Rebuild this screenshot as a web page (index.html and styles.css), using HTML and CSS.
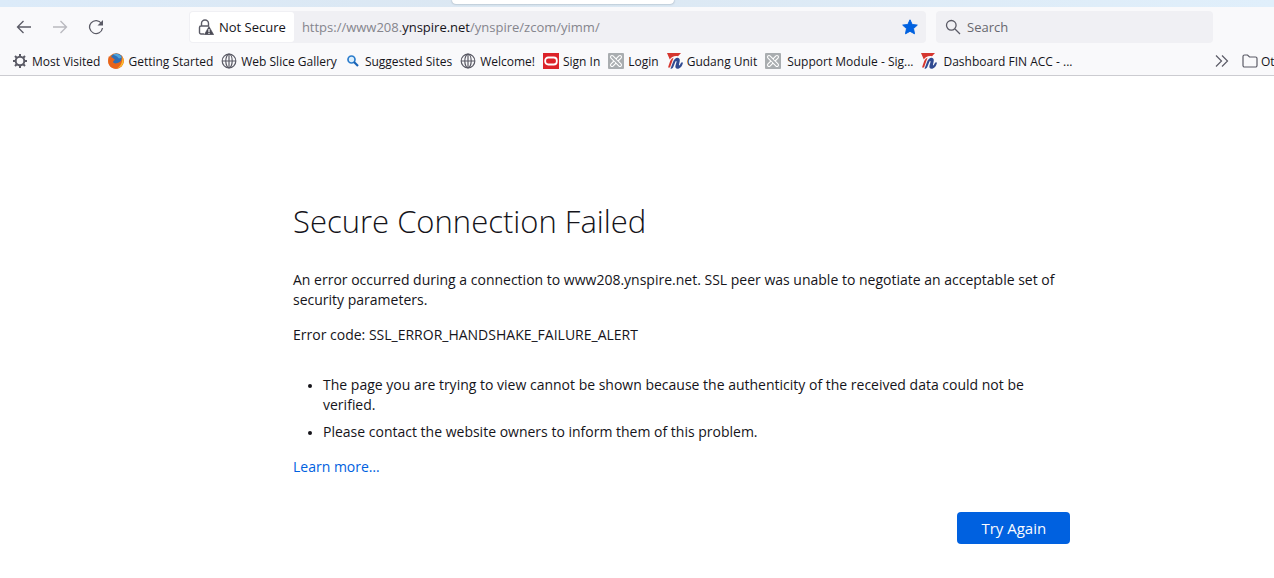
FILE: index.html
```
<!DOCTYPE html>
<html lang="en">
  <head>
    <meta charset="UTF-8" />
    <meta name="viewport" content="width=device-width, initial-scale=1.0" />
    <title>Secure Connection Failed</title>
    <link rel="stylesheet" href="styles.css" />
  </head>
  <body>
    <!-- shared icons -->
    <svg class="sprite" aria-hidden="true">
      <symbol id="globe" viewBox="0 0 16 16">
        <g fill="none" stroke="#5b5b66" stroke-width="1.2">
          <circle cx="8" cy="8" r="6.8" />
          <ellipse cx="8" cy="8" rx="3.2" ry="6.8" />
          <path d="M8 1v14M1 8h14" />
        </g>
      </symbol>
      <symbol id="tools" viewBox="0 0 16 16">
        <rect width="16" height="16" rx="1" fill="#a9adb0" />
        <path d="M4 4l8 8M12 4l-8 8" stroke="#fff" stroke-width="4" stroke-linecap="round" />
        <path d="M4 4l8 8M12 4L9.800 6.200M6.200 9.800L4 12" stroke="#a9adb0" stroke-width="1.800" stroke-linecap="round" />
      </symbol>
      <symbol id="honda" viewBox="0 0 16 16">
        <path d="M0 0h14l-3 3.200C7 2.500 4.500 4 2.800 6.500z" fill="#d5362f" />
        <path d="M3.200 8C4.200 6 5.200 5.200 6.500 4.800L3 14.500H1z" fill="#d5362f" />
        <path d="M3.500 15.800L6 9c1-2.800 3-4.500 4.800-4.200 1.700.3 2.300 1.700 1.900 3.400L12 11.500c-.2 1 .3 1.200.8.4L14.200 9.500H16c-.6 3.800-3 6.300-5.500 6.300-1.800 0-2.500-1.300-2-3.200L9.500 9c.3-1.200-.7-1.400-1.100-.3L6.300 14c-.4 1-1.300 1.800-2.800 1.800z" fill="#304a91" />
      </symbol>
    </svg>

    <header class="browser">
      <div class="tab-strip"><div class="active-tab"></div></div>

      <div class="nav-bar">
        <div class="nav-buttons">
          <button type="button" aria-label="Back">
            <svg viewBox="0 0 16 16"><path d="M15 8H1.500M7.500 2L1.500 8l6 6" /></svg>
          </button>
          <button type="button" aria-label="Forward" disabled>
            <svg viewBox="0 0 16 16"><path d="M1 8h13.500M8.500 2l6 6-6 6" /></svg>
          </button>
          <button type="button" aria-label="Reload">
            <svg viewBox="0 0 16 16">
              <path d="M13.500 4.500A6.500 6.500 0 1 0 14.500 9" />
              <path d="M15 1v5.500H9.500z" fill="#5b5b66" stroke="none" />
            </svg>
          </button>
        </div>

        <div class="url-bar">
          <button type="button" class="identity">
            <svg viewBox="0 0 16 16">
              <path d="M3.500 7V4.500a3.500 3.500 0 0 1 7 0V7M6 15H3A1.500 1.500 0 0 1 1.500 13.500v-5A1.500 1.500 0 0 1 3 7h8" fill="none" stroke="#5b5b66" stroke-width="1.400" />
              <path d="M11 7.500l4.700 8.200H6.300z" fill="#4a4a55" stroke="#4a4a55" stroke-linejoin="round" stroke-width=".6" />
              <path d="M11 10v3M11 13.800v1.100" stroke="#fff" stroke-width="1.200" />
            </svg>
            Not Secure
          </button>
          <a href="#" class="address">https://www208.<span>ynspire.net</span>/ynspire/zcom/yimm/</a>
          <button type="button" class="star" aria-label="Edit this bookmark">
            <svg viewBox="0 0 16 16"><path d="M8 .8l2.200 4.700 5.100.6-3.800 3.500 1 5.200L8 12.300l-4.500 2.500 1-5.200L.7 6.100l5.100-.6z" fill="#0061e0" stroke="#0061e0" stroke-linejoin="round" /></svg>
          </button>
        </div>

        <label class="search-bar">
          <svg viewBox="0 0 16 16"><circle cx="6.300" cy="6.300" r="4.800" /><path d="M10 10l5 5" /></svg>
          <input type="text" placeholder="Search" aria-label="Search" />
        </label>
      </div>

      <nav class="bookmarks">
        <a href="#">
          <svg viewBox="0 0 16 16"><circle cx="8" cy="8" r="4.300" fill="none" stroke="#5b5b66" stroke-width="2" /><path d="M8 1v3M8 12v3M1 8h3M12 8h3M3 3l2.200 2.200M10.800 10.800L13 13M13 3l-2.200 2.200M5.200 10.800L3 13" stroke="#5b5b66" stroke-width="2" /></svg>
          Most Visited
        </a>
        <a href="#">
          <svg viewBox="0 0 16 16">
            <circle cx="8" cy="8" r="7.800" fill="#e8731c" />
            <circle cx="8.500" cy="6.500" r="6" fill="#2f6fb5" />
            <path d="M5 1.500c3-1.500 7-.5 9 3l-3 1-2-2z" fill="#4fa5dd" />
            <path d="M1 3c.5 1 1.500 1.300 3 1.300l2 1.700c1 .3 1 1-.2 1.500L5 9c1 1.800 3 1.500 4.500 1 2-.3 3.500-1.500 4-4l.5-3c1.500 2 2.200 5 1 8-1.500 3.500-5 5-8 4.700C2.500 15 .2 12 .2 8 .2 6 .5 4 1 3z" fill="#e8641b" />
            <path d="M14.500 3.500c1.500 3 1.500 6.500-.5 9-1.500 1.500-3 2.200-4.500 2.500 3-2 5-5 5-11.500z" fill="#fbc02d" />
          </svg>
          Getting Started
        </a>
        <a href="#"><svg><use href="#globe" /></svg>Web Slice Gallery</a>
        <a href="#">
          <svg viewBox="0 0 16 16"><circle cx="6.500" cy="6.500" r="3.500" fill="#dceefb" stroke="#2b7ccc" stroke-width="1.700" /><path d="M9 9l4 4" stroke="#1762b5" stroke-width="2.200" /></svg>
          Suggested Sites
        </a>
        <a href="#"><svg><use href="#globe" /></svg>Welcome!</a>
        <a href="#">
          <svg viewBox="0 0 16 16"><rect width="16" height="16" fill="#dc2229" /><rect x="2.200" y="4.500" width="11.600" height="7" rx="3" fill="none" stroke="#fff" stroke-width="1.800" /></svg>
          Sign In
        </a>
        <a href="#"><svg><use href="#tools" /></svg>Login</a>
        <a href="#"><svg><use href="#honda" /></svg>Gudang Unit</a>
        <a href="#" class="spaced"><svg><use href="#tools" /></svg>Support Module - Sig...</a>
        <a href="#" class="spaced"><svg><use href="#honda" /></svg>Dashboard FIN ACC - ...</a>
        <button type="button" class="overflow" aria-label="More bookmarks">
          <svg viewBox="0 0 16 16"><path d="M2 2.500L7.500 8 2 13.500M8 2.500L13.500 8 8 13.500" fill="none" stroke="#5b5b66" stroke-width="1.200" /></svg>
        </button>
        <a href="#" class="other">
          <svg viewBox="0 0 16 16"><path d="M1 12.500v-9A1.500 1.500 0 0 1 2.500 2h3l2 2h6A1.500 1.500 0 0 1 15 5.500v7a1.500 1.500 0 0 1-1.500 1.500h-11A1.500 1.500 0 0 1 1 12.500z" fill="none" stroke="#5b5b66" stroke-width="1.200" /></svg>
          Ot
        </a>
      </nav>
    </header>

    <main class="error-page">
      <div class="error-content">
        <h1>Secure Connection Failed</h1>
        <p>An error occurred during a connection to www208.ynspire.net. SSL peer was unable to negotiate an acceptable set of security parameters.</p>
        <p>Error code: SSL_ERROR_HANDSHAKE_FAILURE_ALERT</p>
        <ul>
          <li>The page you are trying to view cannot be shown because the authenticity of the received data could not be verified.</li>
          <li>Please contact the website owners to inform them of this problem.</li>
        </ul>
        <a href="#" class="learn-more">Learn more…</a>
        <div class="actions">
          <button type="button" class="try-again">Try Again</button>
        </div>
      </div>
    </main>
  </body>
</html>
```
FILE: styles.css
```
* {
  box-sizing: border-box;
}
body {
  margin: 0;
  background-color: #fff;
  color: #15141a;
  font-family: "Segoe UI", "Open Sans", "Noto Sans", sans-serif;
  font-size: 14px;
  overflow-x: hidden;
}
button {
  border: none;
  background: none;
  padding: 0;
  color: inherit;
  font: inherit;
}
svg {
  display: block;
  flex: none;
  width: 16px;
  height: 16px;
}
.sprite {
  display: none;
}

/* browser toolbars */
.browser {
  background-color: #f9f9fb;
  border-bottom: 1px solid #ccccd1;
}
.tab-strip {
  height: 7px;
  padding: 0 600px 3px 452px;
  background: linear-gradient(90deg, #dcebf9, #dbe7f2 40%, #e0effb);
}
.active-tab {
  height: 4px;
  background-color: #fff;
  border-radius: 0 0 4px 4px;
  box-shadow: 0 0 2px #8493a1;
}
.nav-bar {
  display: flex;
  align-items: center;
  height: 40px;
  padding: 0 61px 0 16px;
  font-size: 13px;
}
.nav-buttons {
  display: flex;
  gap: 20px;
  width: 173px;
}
.nav-buttons svg {
  fill: none;
  stroke: #5b5b66;
  stroke-width: 1.3;
}
.nav-buttons button:disabled {
  opacity: 0.4;
}
.url-bar {
  display: flex;
  align-items: center;
  flex: 1;
  height: 32px;
  margin-right: 10px;
  padding: 1px;
  background-color: #f0f0f4;
  border-radius: 4px;
}
.identity {
  display: flex;
  align-items: center;
  gap: 5px;
  height: 30px;
  padding: 0 8px;
  background-color: #fff;
  border-radius: 3px;
}
.address {
  flex: 1;
  padding-left: 8px;
  color: #85858d;
  text-decoration: none;
}
.address span {
  color: #15141a;
}
.star {
  margin-right: 7px;
}
.search-bar {
  display: flex;
  align-items: center;
  gap: 6px;
  width: 277px;
  height: 32px;
  padding: 0 9px;
  background-color: #f0f0f4;
  border-radius: 4px;
}
.search-bar svg {
  fill: none;
  stroke: #5b5b66;
  stroke-width: 1.3;
}
.search-bar input {
  width: 100%;
  border: none;
  outline: none;
  padding: 0;
  background: none;
  font: inherit;
}
.search-bar input::placeholder {
  color: #68686f;
}
.bookmarks {
  display: flex;
  align-items: center;
  gap: 8px;
  height: 28px;
  padding-left: 12px;
  font-size: 12px;
  white-space: nowrap;
}
.bookmarks a {
  display: flex;
  align-items: center;
  gap: 4px;
  color: #15141a;
  text-decoration: none;
}
.bookmarks .spaced {
  gap: 6px;
}
.bookmarks .overflow {
  margin-left: auto;
  margin-right: 4px;
}
.bookmarks .other {
  gap: 3px;
  width: 32px;
}

/* error page */
.error-page {
  display: grid;
  grid-template-columns: 23fr 61fr 16fr;
  padding-top: 121px;
  line-height: 20px;
}
.error-content {
  grid-column: 2;
}
h1 {
  margin: 0 0 25px;
  font-size: 31px;
  font-weight: 300;
  line-height: 48px;
}
p {
  margin: 0 0 15px;
}
ul {
  margin: 30px 0 15px;
  padding-left: 30px;
}
li {
  margin-bottom: 7px;
}
li::marker {
  font-size: 11px;
}
.learn-more {
  color: #0061e0;
  text-decoration: none;
}
.actions {
  display: flex;
  justify-content: flex-end;
  margin-top: 35px;
}
.try-again {
  height: 32px;
  padding: 0 24px;
  background-color: #0061e0;
  border-radius: 4px;
  color: #fbfbfe;
  font-size: 15px;
}
.try-again:hover {
  background-color: #0250bb;
}
```
